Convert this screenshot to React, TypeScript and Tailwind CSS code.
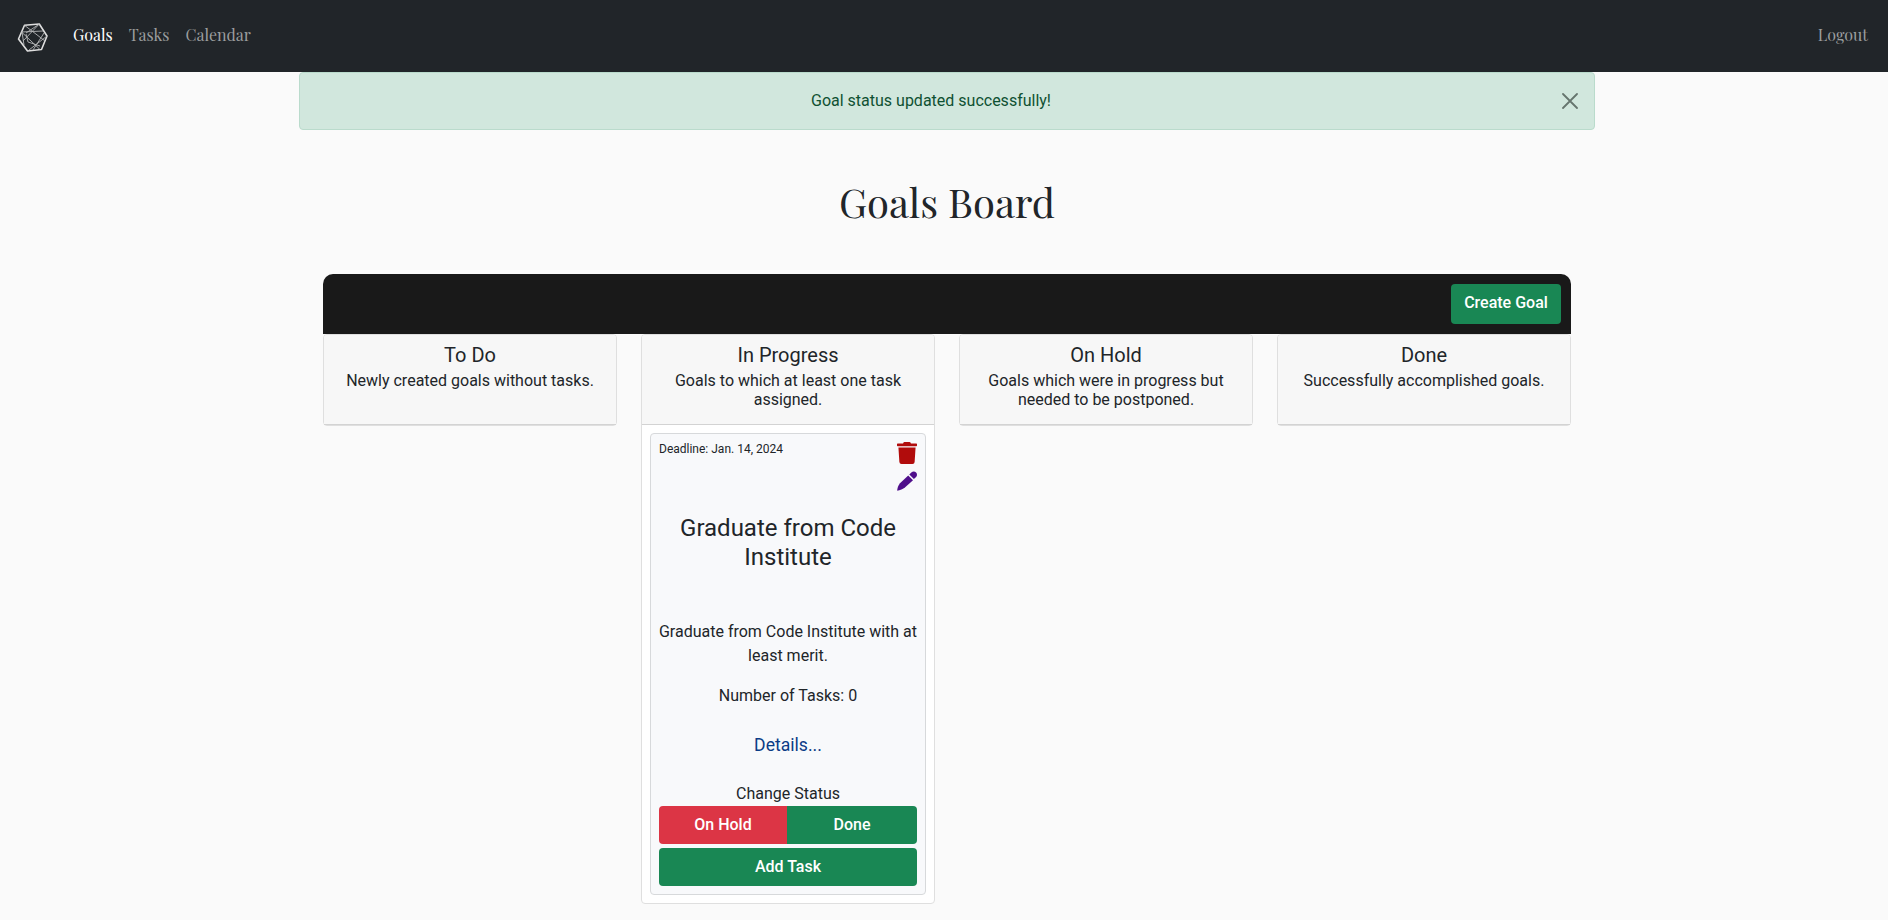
import { FaTrash } from "react-icons/fa";
import type { ReactNode } from "react";

function Logo() {
  return (
    <svg width="32" height="32" viewBox="0 0 32 32" fill="none" strokeLinejoin="round">
      <path d="M8.5 3.3 L23.3 2 L31 14 L25.5 27.5 L11.5 29 L2.5 17 Z" stroke="#dedede" strokeWidth="1.6" />
      <path
        d="M5.5 10 L27 9 M8.5 3.3 L29 19 M23.3 2 L7 19 M31 14 L13 28 M5.5 10 L24 27.5 M6 10 L8 23 M23.3 2 L10 11 M28 11 L17 28 M10 12 L12 20 L24 24"
        stroke="#b4b6b7"
        strokeWidth="0.9"
      />
    </svg>
  );
}

function Pencil() {
  return (
    <svg width="20" height="20" viewBox="0 0 20 20" fill="#4f0f8b" className="shrink-0">
      <path d="M11.2 4.4 L16 9.3 L8.2 16.3 C6 18.1 3 19.2 0.2 19.7 C0.3 17 1.2 14.2 3 12.2 Z" />
      <path d="M12.3 3.4 L14.3 1.4 C15.8 0 18 0.2 19.1 1.4 C20.3 2.7 20.3 4.6 19.1 5.9 L16.9 8.1 Z" />
    </svg>
  );
}

function Column({ title, text, children }: { title: string; text: string; children?: ReactNode }) {
  return (
    <section className="w-[294px] rounded border border-[#dfdfdf] bg-white">
      <header className="h-[90px] rounded-t-[3px] border-b border-[#d3d3d3] bg-[#f7f7f7] px-4 pt-2 text-center">
        <h2 className="text-xl leading-6">{title}</h2>
        <p className="mt-1 text-base leading-[19.2px]">{text}</p>
      </header>
      {children}
    </section>
  );
}

function GoalCard() {
  return (
    <article className="flex h-[462px] flex-col rounded border border-[#d7d9db] bg-[#f8f9fb] p-2 pt-1.5 text-center">
      <div className="flex h-[50px] justify-between">
        <p className="text-xs leading-[18px]">Deadline: Jan. 14, 2024</p>
        <div className="flex flex-col items-end gap-[7px] pt-0.5">
          <FaTrash className="h-[22px] w-5 shrink-0 text-[#b10c0c]" preserveAspectRatio="none" />
          <Pencil />
        </div>
      </div>
      <h3 className="mt-6 text-2xl leading-[28.8px]">Graduate from Code Institute</h3>
      <p className="-mx-1 mt-[48px] leading-6">Graduate from Code Institute with at least merit.</p>
      <p className="mt-4 leading-6">Number of Tasks: 0</p>
      <a className="mt-6 text-[17.6px] leading-[27px] text-[#0b3c86]">Details...</a>
      <p className="mt-[23px] leading-6">Change Status</p>
      <div className="mt-auto flex h-[38px] shrink-0 font-medium text-white">
        <button className="w-32 rounded-l bg-[#dc3545]">On Hold</button>
        <button className="flex-1 rounded-r bg-[#198754]">Done</button>
      </div>
      <button className="mt-1 h-[38px] shrink-0 rounded bg-[#198754] font-medium text-white">Add Task</button>
    </article>
  );
}

export default function App() {
  return (
    <div className="h-[920px] overflow-hidden bg-[#fafafa] font-['Roboto','Liberation_Sans',sans-serif] text-base text-[#212529]">
      <nav className="flex h-[72px] items-center bg-[#212529] pr-5 pl-4 font-['Playfair_Display','Liberation_Serif',serif] text-base text-[#9b9d9e]">
        <div className="mt-1">
          <Logo />
        </div>
        <div className="ml-[25px] flex gap-4 pb-0.5">
          <a className="text-white">Goals</a>
          <a>Tasks</a>
          <a>Calendar</a>
        </div>
        <a className="ml-auto pb-0.5">Logout</a>
      </nav>
      <main className="ml-[299px] w-[1296px]">
        <div className="flex h-[58px] items-center rounded border border-[#badbcc] bg-[#d1e7dd] pr-4 text-[#0f5132]">
          <p className="flex-1 text-center leading-6">Goal status updated successfully!</p>
          <svg width="16" height="16" viewBox="0 0 16 16" stroke="#66756e" strokeWidth="1.8" strokeLinecap="round">
            <path d="M1 1 15 15M15 1 1 15" />
          </svg>
        </div>
        <h1 className="mt-12 text-center font-['Playfair_Display','Liberation_Serif',serif] text-[40px] leading-[48px]">
          Goals Board
        </h1>
        <div className="mx-6 mt-12 flex h-[60px] justify-end rounded-t-[10px] bg-[#191919] p-2.5">
          <button className="h-10 w-[110px] rounded bg-[#198754] pb-[3px] font-medium text-white">Create Goal</button>
        </div>
        <div className="mx-6 flex items-start justify-between">
          <Column title="To Do" text="Newly created goals without tasks." />
          <Column title="In Progress" text="Goals to which at least one task assigned.">
            <div className="p-2">
              <GoalCard />
            </div>
          </Column>
          <Column title="On Hold" text="Goals which were in progress but needed to be postponed." />
          <Column title="Done" text="Successfully accomplished goals." />
        </div>
      </main>
    </div>
  );
}
